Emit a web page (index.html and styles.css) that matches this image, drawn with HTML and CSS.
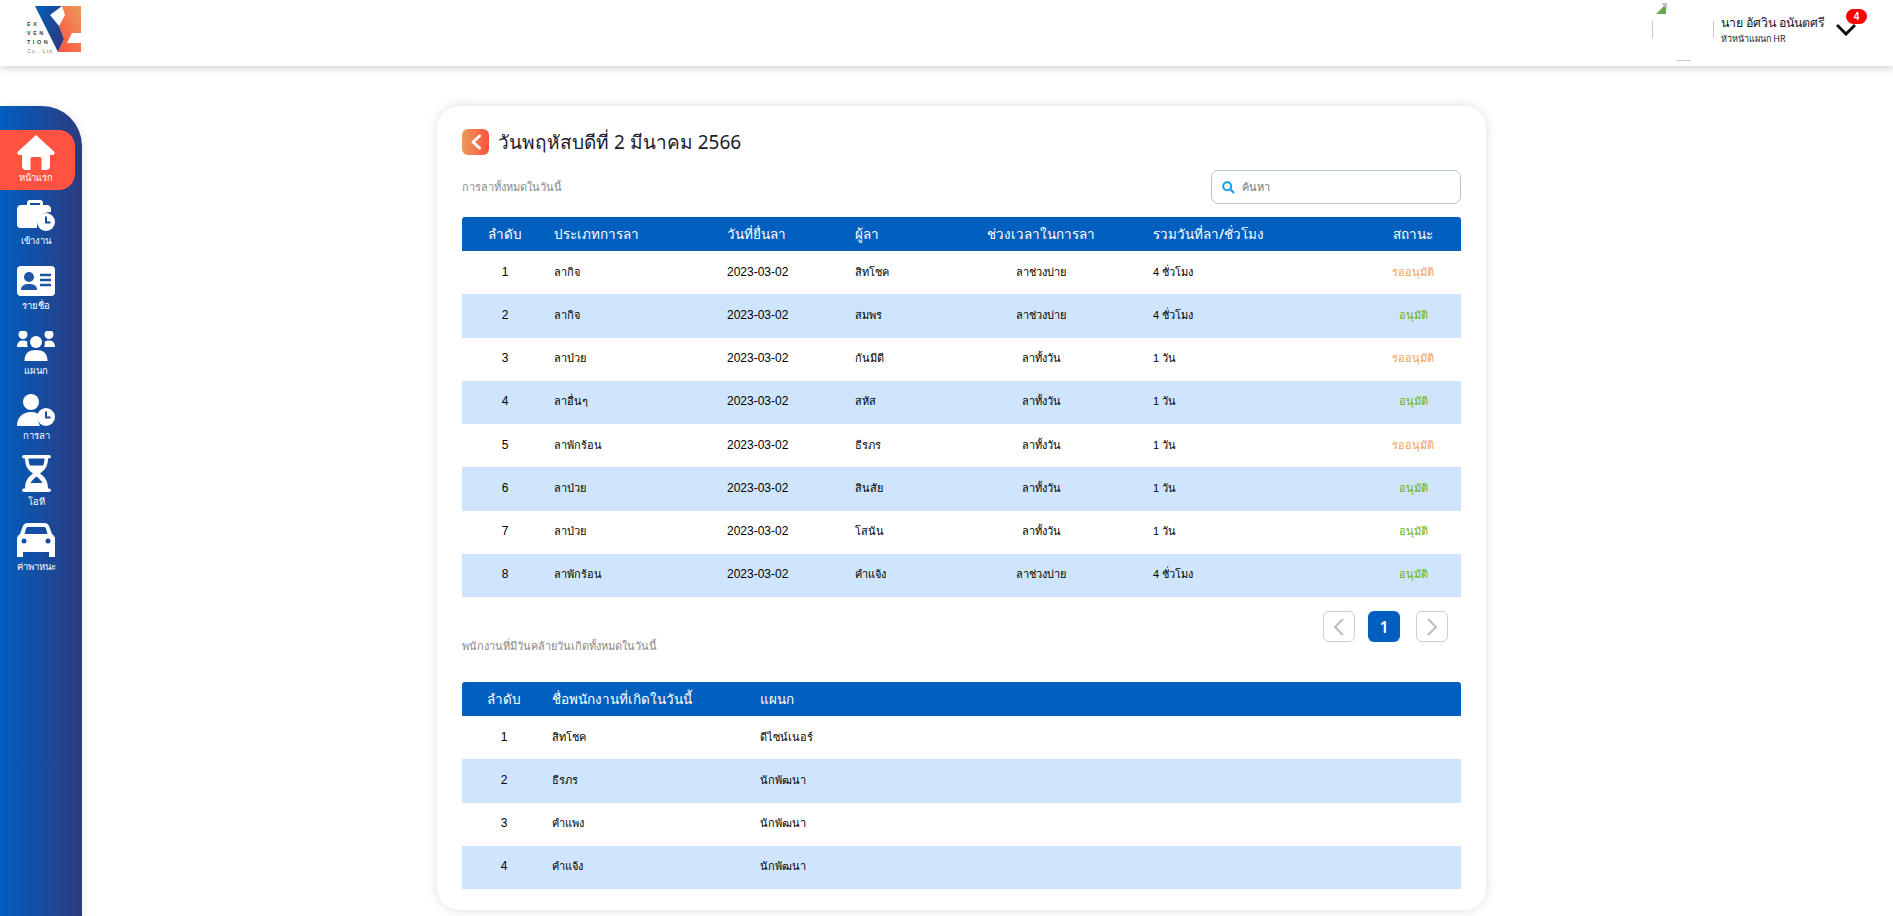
FILE: index.html
```html
<!DOCTYPE html>
<html lang="th">
<head>
    <meta charset="UTF-8">
    <title>Leave today</title>
    <link rel="stylesheet" href="styles.css">
</head>
<body>

<header class="topbar">
    <div class="logo">
        <svg class="logo-mark" width="46" height="46" viewBox="0 0 46 46">
            <defs>
                <linearGradient id="logoBlue" x1="0" y1="0" x2="1" y2="0.6">
                    <stop offset="0" stop-color="#005fbf"/>
                    <stop offset="1" stop-color="#2d3a80"/>
                </linearGradient>
                <linearGradient id="logoOrange" x1="0" y1="1" x2="1" y2="0">
                    <stop offset="0" stop-color="#ff5240"/>
                    <stop offset="1" stop-color="#eb9a5a"/>
                </linearGradient>
            </defs>
            <path d="M27 0H46V27H37L32 37H46V46H23L29 33L24 20L30 9Z" fill="url(#logoOrange)"/>
            <path d="M0 0H27L15 9L24 20L29 33L23 46Z" fill="url(#logoBlue)"/>
        </svg>
        <div class="logo-text">EX<br>VEN<br>TION<br><span>Co., Ltd</span></div>
    </div>
    <div class="user">
        <svg class="avatar" width="62" height="60" viewBox="0 0 62 60">
            <path d="M0.500 18V35M61.500 18V35M24 57.500H38" stroke="#c8c8c8" fill="none"/>
            <path d="M4 11L14 1V11Z" fill="#6aa84f"/>
            <path d="M9 0H15V6Z" fill="#c4c4c4"/>
        </svg>
        <div class="user-info">
            <div class="user-name">นาย อัศวิน อนันตศรี</div>
            <div class="user-role">หัวหน้าแผนก HR</div>
        </div>
        <div class="bell">
            <svg width="20" height="14" viewBox="0 0 20 14"><path d="M1 3L10 12L19 3" fill="none" stroke="#111" stroke-width="3"/></svg>
            <span class="badge">4</span>
        </div>
    </div>
</header>

<div class="page">
    <nav class="sidebar">
        <a class="nav-item active">
            <svg width="38" height="35" viewBox="0 0 38 35"><path fill="#fff" d="M19 0L37 16.500C38.500 18 37.500 20 35.500 20H33V31C33 33 31.500 35 29.500 35H24.500V24C24.500 22.500 23.500 22 22.500 22H15.500C14.500 22 13.500 22.500 13.500 24V35H8.500C6.500 35 5 33 5 31V20H2.500C0.500 20 -0.500 18 1 16.500Z"/></svg>
            <span>หน้าแรก</span>
        </a>
        <a class="nav-item">
            <svg width="38" height="31" viewBox="0 0 38 31"><path fill="#fff" d="M10 5V3C10 1.300 11.300 0 13 0H23C24.700 0 26 1.300 26 3V5H30C32 5 34 6.500 34 9V12C26 12 21 17 20.500 22H2C1 22 0 21 0 20V15H20V17H13V15H0V9C0 6.500 2 5 4 5ZM13 3V5H23V3ZM0 17H11V19H15V17H20V28H3C1.300 28 0 26.500 0 25Z"/><circle cx="29" cy="22" r="9" fill="#fff"/><path d="M29 16.500V22.500H33.500" fill="none" stroke="#1a4d9c" stroke-width="2"/></svg>
            <span>เข้างาน</span>
        </a>
        <a class="nav-item">
            <svg width="38" height="30" viewBox="0 0 38 30"><rect width="38" height="30" rx="4" fill="#fff"/><circle cx="12" cy="11" r="5" fill="#1f55a5"/><path d="M4 24C4 19 8 18 12 18C16 18 20 19 20 24Z" fill="#1f55a5"/><path d="M23 9H34M23 14H34M23 19H34" stroke="#1f55a5" stroke-width="2.500"/></svg>
            <span>รายชื่อ</span>
        </a>
        <a class="nav-item">
            <svg width="38" height="30" viewBox="0 0 38 30"><g fill="#fff"><circle cx="6" cy="3.500" r="4.500"/><circle cx="32" cy="3.500" r="4.500"/><path d="M0 16C0 11 3 9.500 6 9.500C8 9.500 9.500 10 10.500 11C9.800 12.500 10 14.500 11 16Z"/><path d="M38 16C38 11 35 9.500 32 9.500C30 9.500 28.500 10 27.500 11C28.200 12.500 28 14.500 27 16Z"/><circle cx="19" cy="11" r="6"/><path d="M7.500 30C7.500 22 12 19 19 19C26 19 30.500 22 30.500 30Z"/></g></svg>
            <span>แผนก</span>
        </a>
        <a class="nav-item">
            <svg width="38" height="32" viewBox="0 0 38 32"><circle cx="14" cy="8" r="8" fill="#fff"/><path d="M0 32C0 23 6 18 14 18C17 18 19 18.500 21 20C20 24 21 28 23 32Z" fill="#fff"/><circle cx="29" cy="23" r="9" fill="#fff"/><path d="M29 17.500V23.500H33.500" fill="none" stroke="#24489a" stroke-width="2"/></svg>
            <span>การลา</span>
        </a>
        <a class="nav-item">
            <svg width="29" height="37" viewBox="0 0 29 37"><path fill="#fff" fill-rule="evenodd" d="M2 0H27C29.500 0 29.500 3.500 27 3.500H26C26 10 23.500 15 18 18.500C23.500 22 26 27 26 33.500H27C29.500 33.500 29.500 37 27 37H2C-0.500 37 -0.500 33.500 2 33.500H3C3 27 5.500 22 11 18.500C5.500 15 3 10 3 3.500H2C-0.500 3.500 -0.500 0 2 0ZM6.500 3.500C6.500 6 7 8.500 8 10.500H21C22 8.500 22.500 6 22.500 3.500ZM14.500 21.500C12 23.500 10 25.500 8.500 28H20.500C19 25.500 17 23.500 14.500 21.500Z"/></svg>
            <span>โอที</span>
        </a>
        <a class="nav-item">
            <svg width="38" height="34" viewBox="0 0 38 34"><path fill="#fff" fill-rule="evenodd" d="M11 0H27C30 0 31.500 1.500 32.500 4L35 11C37 12 38 14 38 16V34H32V29H6V34H0V16C0 14 1 12 3 11L5.500 4C6.500 1.500 8 0 11 0ZM11 4C10 4 9.500 4.500 9 5.500L7.500 11H30.500L29 5.500C28.500 4.500 28 4 27 4ZM7 15.500A2.500 2.500 0 1 0 7 20.500A2.500 2.500 0 1 0 7 15.500ZM31 15.500A2.500 2.500 0 1 0 31 20.500A2.500 2.500 0 1 0 31 15.500Z"/></svg>
            <span>ค่าพาหนะ</span>
        </a>
    </nav>

    <main class="card">
        <div class="card-title">
            <span class="back-btn">
                <svg width="12" height="16" viewBox="0 0 12 16"><path d="M9.500 2L3 8L9.500 14" fill="none" stroke="#fff" stroke-width="3" stroke-linecap="round" stroke-linejoin="round"/></svg>
            </span>
            <h1>วันพฤหัสบดีที่ 2 มีนาคม 2566</h1>
        </div>

        <div class="toolbar">
            <span class="caption">การลาทั้งหมดในวันนี้</span>
            <div class="search">
                <svg width="13" height="13" viewBox="0 0 13 13"><circle cx="5.200" cy="5.200" r="4" fill="none" stroke="#1c9be6" stroke-width="2"/><path d="M8.200 8.200L12 12" stroke="#1c9be6" stroke-width="2.200"/></svg>
                <span>ค้นหา</span>
            </div>
        </div>

        <table class="data-table leave-table">
            <thead>
                <tr>
                    <th class="center c1">ลำดับ</th>
                    <th class="c2">ประเภทการลา</th>
                    <th class="c3">วันที่ยื่นลา</th>
                    <th class="c4">ผู้ลา</th>
                    <th class="center c5">ช่วงเวลาในการลา</th>
                    <th class="c6">รวมวันที่ลา/ชั่วโมง</th>
                    <th class="center">สถานะ</th>
                </tr>
            </thead>
            <tbody>
                <tr><td class="center num">1</td><td>ลากิจ</td><td class="num">2023-03-02</td><td>สิทโชค</td><td class="center">ลาช่วงบ่าย</td><td>4 ชั่วโมง</td><td class="center wait">รออนุมัติ</td></tr>
                <tr><td class="center num">2</td><td>ลากิจ</td><td class="num">2023-03-02</td><td>สมพร</td><td class="center">ลาช่วงบ่าย</td><td>4 ชั่วโมง</td><td class="center ok">อนุมัติ</td></tr>
                <tr><td class="center num">3</td><td>ลาป่วย</td><td class="num">2023-03-02</td><td>กันมีดี</td><td class="center">ลาทั้งวัน</td><td>1 วัน</td><td class="center wait">รออนุมัติ</td></tr>
                <tr><td class="center num">4</td><td>ลาอื่นๆ</td><td class="num">2023-03-02</td><td>สหัส</td><td class="center">ลาทั้งวัน</td><td>1 วัน</td><td class="center ok">อนุมัติ</td></tr>
                <tr><td class="center num">5</td><td>ลาพักร้อน</td><td class="num">2023-03-02</td><td>ธีรภร</td><td class="center">ลาทั้งวัน</td><td>1 วัน</td><td class="center wait">รออนุมัติ</td></tr>
                <tr><td class="center num">6</td><td>ลาป่วย</td><td class="num">2023-03-02</td><td>สินสัย</td><td class="center">ลาทั้งวัน</td><td>1 วัน</td><td class="center ok">อนุมัติ</td></tr>
                <tr><td class="center num">7</td><td>ลาป่วย</td><td class="num">2023-03-02</td><td>โสนัน</td><td class="center">ลาทั้งวัน</td><td>1 วัน</td><td class="center ok">อนุมัติ</td></tr>
                <tr><td class="center num">8</td><td>ลาพักร้อน</td><td class="num">2023-03-02</td><td>คำแจ้ง</td><td class="center">ลาช่วงบ่าย</td><td>4 ชั่วโมง</td><td class="center ok">อนุมัติ</td></tr>
            </tbody>
        </table>

        <div class="table-foot">
            <span class="caption">พนักงานที่มีวันคล้ายวันเกิดทั้งหมดในวันนี้</span>
            <div class="pager">
                <span class="page-btn"><svg width="12" height="20" viewBox="0 0 12 20"><path d="M10 2L2 10L10 18" fill="none" stroke="#bdbdbd" stroke-width="2"/></svg></span>
                <span class="page-btn current">1</span>
                <span class="page-btn"><svg width="12" height="20" viewBox="0 0 12 20"><path d="M2 2L10 10L2 18" fill="none" stroke="#bdbdbd" stroke-width="2"/></svg></span>
            </div>
        </div>

        <table class="data-table birthday-table">
            <thead>
                <tr>
                    <th class="center b1">ลำดับ</th>
                    <th class="b2">ชื่อพนักงานที่เกิดในวันนี้</th>
                    <th>แผนก</th>
                </tr>
            </thead>
            <tbody>
                <tr><td class="center num">1</td><td>สิทโชค</td><td>ดีไซน์เนอร์</td></tr>
                <tr><td class="center num">2</td><td>ธีรภร</td><td>นักพัฒนา</td></tr>
                <tr><td class="center num">3</td><td>คำแพง</td><td>นักพัฒนา</td></tr>
                <tr><td class="center num">4</td><td>คำแจ้ง</td><td>นักพัฒนา</td></tr>
            </tbody>
        </table>
    </main>
</div>

</body>
</html>
```

FILE: styles.css
```css
/* Reset */
html, body {
    height: 100%;
    margin: 0;
    padding: 0;
    overflow: hidden;
    background-color: #fff;
    font-family: "Liberation Sans", Arial, sans-serif;
    color: #000;
}

/* Top bar */
.topbar {
    height: 66px;
    display: flex;
    align-items: center;
    justify-content: space-between;
    background: #fff;
    box-shadow: 0 2px 8px rgba(0, 0, 0, 0.2);
    box-sizing: border-box;
    padding: 0 25px 0 35px;
    position: relative;
    z-index: 2;
}

.logo {
    position: relative;
    width: 46px;
    height: 46px;
    margin-top: -8px;
}

.logo-mark {
    display: block;
}

.logo-text {
    position: absolute;
    left: -8px;
    top: 14px;
    width: 28px;
    font-size: 5.500px;
    line-height: 9px;
    font-weight: bold;
    letter-spacing: 2.500px;
    color: #444;
    white-space: nowrap;
}

.logo-text span {
    font-weight: normal;
    letter-spacing: 0.800px;
    color: #888;
}

.user {
    display: flex;
    align-items: center;
}

.avatar {
    display: block;
    margin-right: 7px;
}

.user-info {
    width: 117px;
    margin-top: -6px;
}

.user-name {
    font-family: "Noto Sans", sans-serif;
    font-size: 12.400px;
    line-height: 18px;
    color: #1a1a2e;
}

.user-role {
    font-family: "Noto Sans", sans-serif;
    font-size: 9px;
    line-height: 14px;
    color: #1a1a2e;
}

.bell {
    position: relative;
    align-self: flex-start;
    width: 30px;
    height: 30px;
    margin-top: 6px;
}

.bell svg {
    position: absolute;
    left: -2px;
    top: 13px;
}

.badge {
    position: absolute;
    left: 8px;
    top: 0;
    width: 21px;
    height: 15px;
    border-radius: 8px;
    background: #f00;
    color: #fff;
    font-size: 10px;
    font-weight: bold;
    line-height: 15px;
    text-align: center;
}

/* Page below the bar */
.page {
    display: flex;
    align-items: flex-start;
    height: 850px;
}

/* Sidebar */
.sidebar {
    width: 82px;
    height: 810px;
    margin-top: 40px;
    padding-top: 24px;
    box-sizing: border-box;
    flex-shrink: 0;
    border-top-right-radius: 40px;
    background: linear-gradient(to right, #005fbf, #2d3a80);
    box-shadow: 2px 0 8px rgba(0, 0, 0, 0.08);
}

.nav-item {
    width: 75px;
    padding-right: 3px;
    margin-bottom: 18px;
    display: flex;
    flex-direction: column;
    align-items: center;
    box-sizing: border-box;
    color: #fff;
    font-family: "Noto Sans", sans-serif;
    font-size: 9.500px;
    line-height: 14px;
}

.nav-item svg {
    display: block;
    margin-bottom: 3px;
}

.nav-item:nth-child(4) { margin-bottom: 16px; }
.nav-item:nth-child(5) { margin-bottom: 12px; }
.nav-item:nth-child(6) { margin-bottom: 14px; }

.nav-item.active {
    height: 60px;
    margin-bottom: 10px;
    padding-top: 5px;
    background: #ff5240;
    border-radius: 0 16px 16px 0;
}

.nav-item.active svg {
    margin-bottom: 1px;
}

/* Card */
.card {
    width: 1049px;
    height: 804px;
    margin: 40px 0 0 355px;
    padding: 23px 25px 0;
    box-sizing: border-box;
    background: #fff;
    border-radius: 22px;
    box-shadow: 0 0 12px rgba(0, 0, 0, 0.14);
}

.card-title {
    display: flex;
    align-items: center;
    gap: 9px;
    height: 26px;
}

.back-btn {
    width: 27px;
    height: 26px;
    display: flex;
    align-items: center;
    justify-content: center;
    border-radius: 6px;
    background: linear-gradient(to right, #eb9a5a, #ff5240);
}

h1 {
    margin: 0;
    font-family: "Noto Sans", sans-serif;
    font-size: 19px;
    font-weight: 400;
    color: #1a1a2e;
}

.toolbar {
    height: 34px;
    margin-top: 15px;
    display: flex;
    align-items: center;
    justify-content: space-between;
}

.caption {
    font-family: "Noto Sans", sans-serif;
    font-size: 11px;
    color: #8a8a8a;
}

.search {
    width: 250px;
    height: 34px;
    display: flex;
    align-items: center;
    gap: 7px;
    padding-left: 10px;
    box-sizing: border-box;
    border: 1px solid #b4c6d8;
    border-radius: 7px;
    font-family: "Noto Sans", sans-serif;
    font-size: 11px;
    color: #777;
}

/* Tables */
.data-table {
    width: 999px;
    table-layout: fixed;
    border-collapse: collapse;
    font-size: 11px;
}

.leave-table {
    margin-top: 13px;
}

.data-table th {
    height: 34px;
    padding: 0 6px;
    box-sizing: border-box;
    background: #005fbf;
    color: #fff;
    font-family: "Noto Sans", sans-serif;
    font-size: 13.500px;
    font-weight: 500;
    text-align: left;
}

.data-table th:first-child {
    border-top-left-radius: 3px;
}

.data-table th:last-child {
    border-top-right-radius: 3px;
}

.data-table td {
    height: 43.250px;
    padding: 0 6px 2px;
    box-sizing: border-box;
}

.data-table tbody tr:nth-child(even) td {
    background: #cfe5fd;
}

.data-table .center {
    text-align: center;
}

.data-table .num {
    font-size: 12px;
}

.c1 { width: 86px; }
.c2 { width: 173px; }
.c3 { width: 128px; }
.c4 { width: 86px; }
.c5 { width: 212px; }
.c6 { width: 218px; }

.b1 { width: 84px; }
.b2 { width: 208px; }

.wait {
    color: #f0a060;
}

.ok {
    color: #6db300;
}

.table-foot {
    height: 85px;
    display: flex;
    align-items: flex-start;
    justify-content: space-between;
}

.table-foot .caption {
    margin-top: 40px;
}

.pager {
    display: flex;
    gap: 13px;
    margin: 14px 13px 0 0;
}

.page-btn {
    width: 32px;
    height: 31px;
    display: flex;
    align-items: center;
    justify-content: center;
    box-sizing: border-box;
    border: 1px solid #ccc;
    border-radius: 6px;
}

.page-btn.current {
    margin-right: 3px;
    border: 0;
    background: #005fbf;
    color: #fff;
    font-family: "Noto Sans", sans-serif;
    font-size: 16px;
    font-weight: 600;
}
```
